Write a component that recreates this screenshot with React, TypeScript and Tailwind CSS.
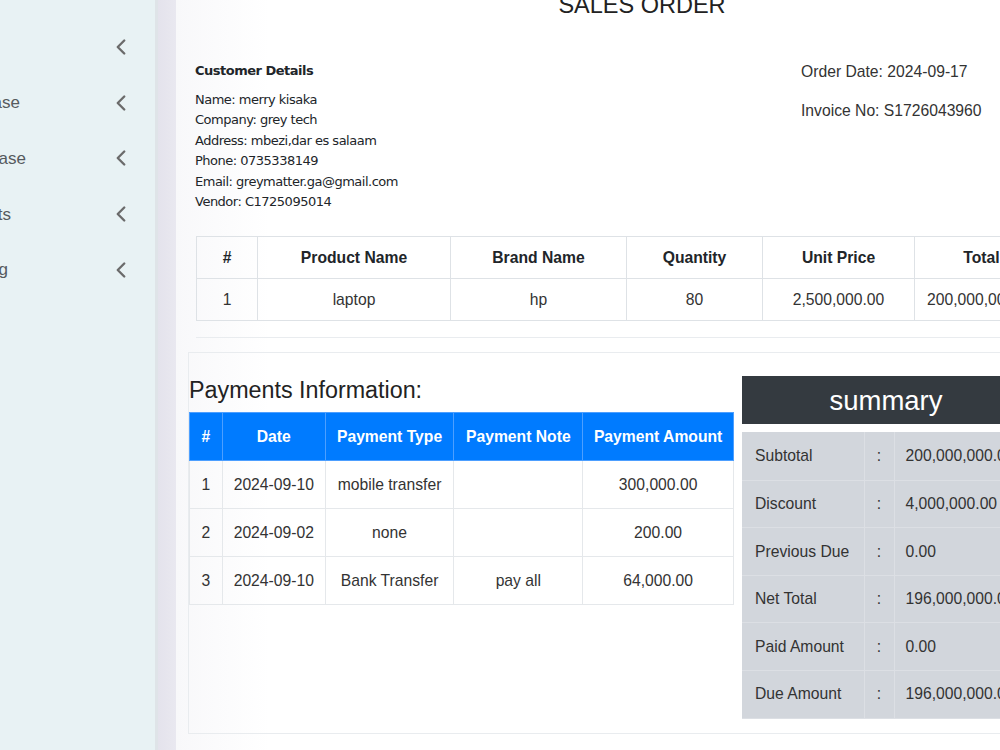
import React from "react";
import { ChevronLeft } from "lucide-react";

const menu = [
  { label: "Products", end: "w-[0px]" },
  { label: "Purchase", end: "w-[20px]" },
  { label: "Purchase", end: "w-[26px]" },
  { label: "Reports", end: "w-[11px]" },
  { label: "Setting", end: "w-[8px]" },
];

const products = [
  { id: 1, name: "laptop", brand: "hp", qty: "80", price: "2,500,000.00", total: "200,000,000.00" },
];

const payments = [
  { id: 1, date: "2024-09-10", type: "mobile transfer", note: "", amount: "300,000.00" },
  { id: 2, date: "2024-09-02", type: "none", note: "", amount: "200.00" },
  { id: 3, date: "2024-09-10", type: "Bank Transfer", note: "pay all", amount: "64,000.00" },
];

const summary = [
  ["Subtotal", "200,000,000.00"],
  ["Discount", "4,000,000.00"],
  ["Previous Due", "0.00"],
  ["Net Total", "196,000,000.00"],
  ["Paid Amount", "0.00"],
  ["Due Amount", "196,000,000.00"],
];

const App = () => {
  return (
    <div className="w-[1000px] h-[750px] overflow-hidden flex bg-white font-['Liberation_Sans',Arial,sans-serif] text-[15.7px] text-[#212529]">
      {/* sidebar, scrolled so labels are cut off */}
      <aside className="w-[155px] shrink-0 bg-[#e8f2f4] overflow-hidden pt-[19px]">
        {menu.map((m, i) => (
          <div key={i} className="h-[55.8px] flex items-center">
            <div className={`${m.end} shrink-0 flex justify-end whitespace-nowrap text-[17px] text-[#555a5e]`}>
              {m.label}
            </div>
            <div className="flex-1" />
            <ChevronLeft size={26} strokeWidth={2.2} className="text-[#6b6b6b] mr-[21px]" />
          </div>
        ))}
      </aside>
      <div className="w-[3px] shrink-0 bg-[#dfe4e8]" />
      <div className="w-[18px] shrink-0 bg-gradient-to-r from-[#e4e3ec] to-[#e9e8f0]" />

      <main className="w-[932px] shrink-0 bg-gradient-to-r from-[#f8f8fa] to-white to-[10%]">
        <h1 className="-mt-[8px] h-[26px] leading-[26px] text-center text-[23.5px] text-[#222]">SALES ORDER</h1>

        <div className="flex mt-[44px] pl-[19px]">
          <div className="w-[606px] font-['DejaVu_Sans',Tahoma,sans-serif] text-[13px] tracking-[-0.5px] text-[#212529]">
            <h3 className="font-bold text-[13px] leading-[18px]">Customer Details</h3>
            <div className="mt-[10px] leading-[20.4px]">
              <p>Name: merry kisaka</p>
              <p>Company: grey tech</p>
              <p>Address: mbezi,dar es salaam</p>
              <p>Phone: 0735338149</p>
              <p>Email: greymatter.ga@gmail.com</p>
              <p>Vendor: C1725095014</p>
            </div>
          </div>
          <div className="pt-[1px] text-[#333] leading-[18px]">
            <p>Order Date: 2024-09-17</p>
            <p className="mt-[21px]">Invoice No: S1726043960</p>
          </div>
        </div>

        <div className="pl-[20px] mt-[24px]">
          <table className="border-collapse text-center">
            <thead>
              <tr className="h-[42px] font-bold">
                <th className="w-[61px] border border-[#dee2e6]">#</th>
                <th className="w-[193px] border border-[#dee2e6]">Product Name</th>
                <th className="w-[176px] border border-[#dee2e6]">Brand Name</th>
                <th className="w-[136px] border border-[#dee2e6]">Quantity</th>
                <th className="w-[152px] border border-[#dee2e6]">Unit Price</th>
                <th className="w-[134px] border border-[#dee2e6]">Total</th>
              </tr>
            </thead>
            <tbody>
              {products.map((p) => (
                <tr key={p.id} className="h-[42px] text-[#333]">
                  <td className="border border-[#dee2e6]">{p.id}</td>
                  <td className="border border-[#dee2e6]">{p.name}</td>
                  <td className="border border-[#dee2e6]">{p.brand}</td>
                  <td className="border border-[#dee2e6]">{p.qty}</td>
                  <td className="border border-[#dee2e6]">{p.price}</td>
                  <td className="border border-[#dee2e6] whitespace-nowrap">{p.total}</td>
                </tr>
              ))}
            </tbody>
          </table>
          <hr className="mt-[16px] border-t border-[#e9ecef]" />
        </div>

        <div className="ml-[12px] mt-[14px] h-[382px] border border-[#e9ecef] flex gap-[8px]">
          <div className="w-[545px] shrink-0">
            <h2 className="mt-[23px] text-[23.3px] leading-[28px] text-[#222]">Payments Information:</h2>
            <table className="mt-[8px] border-collapse text-center w-[545px]">
              <thead>
                <tr className="h-[48px] bg-[#007bff] text-white font-bold">
                  <th className="w-[33px] border border-[#4d9fff]">#</th>
                  <th className="w-[103px] border border-[#4d9fff]">Date</th>
                  <th className="w-[129px] border border-[#4d9fff]">Payment Type</th>
                  <th className="w-[129px] border border-[#4d9fff]">Payment Note</th>
                  <th className="w-[151px] border border-[#4d9fff]">Payment Amount</th>
                </tr>
              </thead>
              <tbody>
                {payments.map((p) => (
                  <tr key={p.id} className="h-[48px] text-[#333]">
                    <td className="border border-[#e5e8eb]">{p.id}</td>
                    <td className="border border-[#e5e8eb]">{p.date}</td>
                    <td className="border border-[#e5e8eb]">{p.type}</td>
                    <td className="border border-[#e5e8eb]">{p.note}</td>
                    <td className="border border-[#e5e8eb]">{p.amount}</td>
                  </tr>
                ))}
              </tbody>
            </table>
          </div>

          <div className="w-[288px] shrink-0 mt-[23px]">
            <div className="h-[48px] bg-[#343a40] text-white text-[27.5px] flex items-center justify-center">
              summary
            </div>
            <table className="mt-[8px] w-[288px] border-collapse bg-[#d2d6dc] text-[#333]">
              <tbody>
                {summary.map(([k, v]) => (
                  <tr key={k} className="h-[47.6px]">
                    <td className="w-[122px] pl-[13px] border-b border-r border-[#dcdfe4]">{k}</td>
                    <td className="w-[30px] text-center border-b border-r border-[#dcdfe4]">:</td>
                    <td className="pl-[11px] whitespace-nowrap border-b border-[#dcdfe4]">{v}</td>
                  </tr>
                ))}
              </tbody>
            </table>
          </div>
        </div>
      </main>
    </div>
  );
};

export default App;
